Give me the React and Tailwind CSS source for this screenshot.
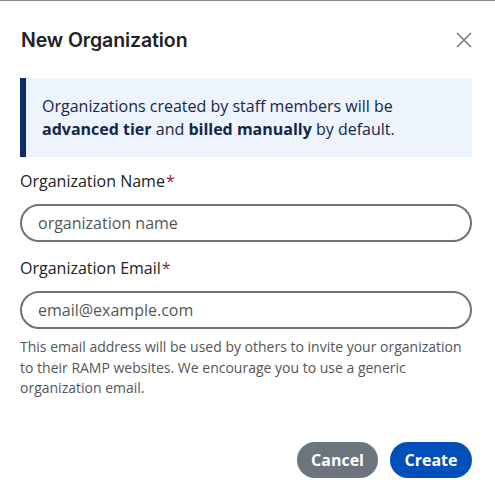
import React from 'react';

const CloseIcon = () => (
  <svg width="16" height="16" viewBox="0 0 16 16" fill="none" stroke="#7a7a7a" strokeWidth="1.6">
    <path d="M1 1 L15 15 M15 1 L1 15" />
  </svg>
);

const Label = ({ children }) => (
  <label className="block text-[16px] leading-[22px] text-[#222]">
    {children}
    <span className="text-[#8a1c4f] ml-[1px]">*</span>
  </label>
);

const App = () => {
  return (
    <div className="w-[495px] h-[502px] bg-white border-t border-[#8a8a8a] font-['Open_Sans',sans-serif]">
      <div className="flex items-center justify-between pl-[21px] pr-[23px] pt-[26px]">
        <h2 className="font-['Inter',sans-serif] font-semibold text-[19.5px] leading-[26px] text-[#222] tracking-[-0.1px]">
          New Organization
        </h2>
        <button className="p-0">
          <CloseIcon />
        </button>
      </div>

      <div className="ml-[20px] mr-[23px] mt-[25px] border-l-[6px] border-[#0c2d6b] bg-[#edf4fd] pl-[16px] pr-3 pt-[17px] pb-[16px] text-[16px] leading-[23px] text-[#14264a]">
        Organizations created by staff members will be{' '}
        <b className="font-bold">advanced tier</b> and <b className="font-bold">billed manually</b> by default.
      </div>

      <div className="pl-[20px] pr-[23px] pt-[13px]">
        <Label>Organization Name</Label>
        <input
          className="mt-[12px] block w-full h-[38px] rounded-full border-2 border-[#6c737b] px-[16px] text-[16px] placeholder:text-[#555] outline-none"
          placeholder="organization name"
        />
        <div className="mt-[15px]">
          <Label>Organization Email</Label>
        </div>
        <input
          className="mt-[12px] block w-full h-[38px] rounded-full border-2 border-[#6c737b] px-[16px] text-[16px] placeholder:text-[#555] outline-none"
          placeholder="email@example.com"
        />
        <p className="mt-[8px] text-[14px] leading-[20.5px] text-[#555]">
          This email address will be used by others to invite your organization to their RAMP websites. We encourage you to use a generic organization email.
        </p>
      </div>

      <div className="flex justify-end gap-[12px] px-[23px] mt-[43px]">
        <button className="h-[36px] w-[81px] rounded-full bg-[#6c757d] text-white font-bold text-[16px]">
          Cancel
        </button>
        <button className="h-[36px] w-[82px] rounded-full bg-[#004fbb] text-white font-bold text-[16px]">
          Create
        </button>
      </div>
    </div>
  );
};

export default App;
